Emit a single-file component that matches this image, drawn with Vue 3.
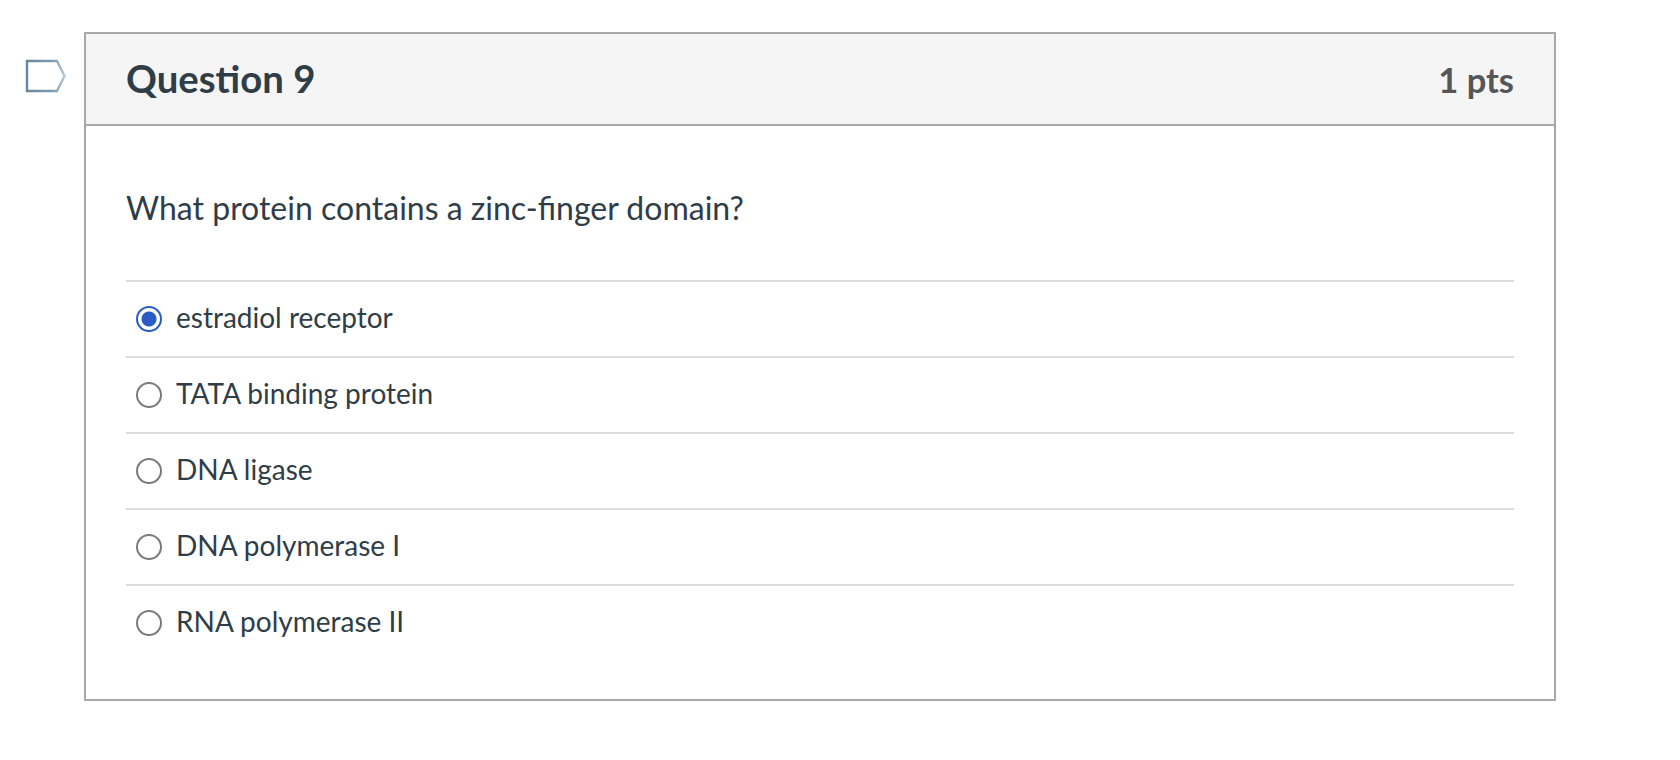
<template>
  <div class="page">
    <svg class="flag" width="42" height="34" viewBox="0 0 42 34">
      <defs>
        <linearGradient id="flagStroke" x1="0" y1="0" x2="1" y2="0">
          <stop offset="0" stop-color="#68889f" />
          <stop offset="0.7" stop-color="#7f9db5" />
          <stop offset="1" stop-color="#b4c8d8" />
        </linearGradient>
      </defs>
      <path d="M2 2 H32 L39.5 17 L32 32 H2 Z" fill="#fff" stroke="url(#flagStroke)" stroke-width="2.4" />
    </svg>
    <div class="question">
      <div class="header">
        <h2>Question 9</h2>
        <span class="pts">1 pts</span>
      </div>
      <div class="body">
        <p class="text">What protein contains a zinc-finger domain?</p>
        <div class="answers">
          <div v-for="a in answers" :key="a" class="answer">
            <span class="radio" :class="{ checked: a === selected }"></span>
            <span class="label">{{ a }}</span>
          </div>
        </div>
      </div>
    </div>
  </div>
</template>

<script setup>
const answers = [
  'estradiol receptor',
  'TATA binding protein',
  'DNA ligase',
  'DNA polymerase I',
  'RNA polymerase II'
];
const selected = 'estradiol receptor';
</script>

<style>
body {
  background: #fff;
}
</style>

<style scoped>
.page {
  display: flex;
  align-items: flex-start;
  width: 1680px;
  height: 760px;
  padding: 32px 0 0 25px;
  box-sizing: border-box;
  font-family: Lato, "Liberation Sans", sans-serif;
  color: #2f3d47;
}

.flag {
  margin: 27px 17px 0 0;
  flex: none;
}

.question {
  width: 1472px;
  height: 669px;
  box-sizing: border-box;
  border: 2px solid #a8a8a8;
}

.header {
  display: flex;
  justify-content: space-between;
  align-items: center;
  height: 90px;
  padding: 0 40px;
  background: #f5f5f5;
  border-bottom: 2px solid #a8a8a8;
}

.header h2 {
  margin: 0;
  padding-bottom: 2px;
  font-size: 38.3px;
  font-weight: 700;
}

.pts {
  font-size: 34.5px;
  font-weight: 700;
  color: #565656;
}

.body {
  padding: 0 40px;
}

.text {
  margin: 0;
  padding-top: 62px;
  height: 154px;
  box-sizing: border-box;
  font-size: 32px;
  line-height: 40px;
}

.answer {
  display: flex;
  align-items: center;
  height: 76px;
  box-sizing: border-box;
  border-top: 2px solid #dcdcdc;
  font-size: 28px;
}

.label {
  padding-bottom: 5px;
}

.radio {
  width: 26px;
  height: 26px;
  margin: 0 14px 0 10px;
  box-sizing: border-box;
  border: 2px solid #7a7a7a;
  border-radius: 50%;
  flex: none;
}

.radio.checked {
  border-color: #2a5bc4;
  background: radial-gradient(circle, #2a5bc4 0 7px, #fff 8px);
}
</style>
